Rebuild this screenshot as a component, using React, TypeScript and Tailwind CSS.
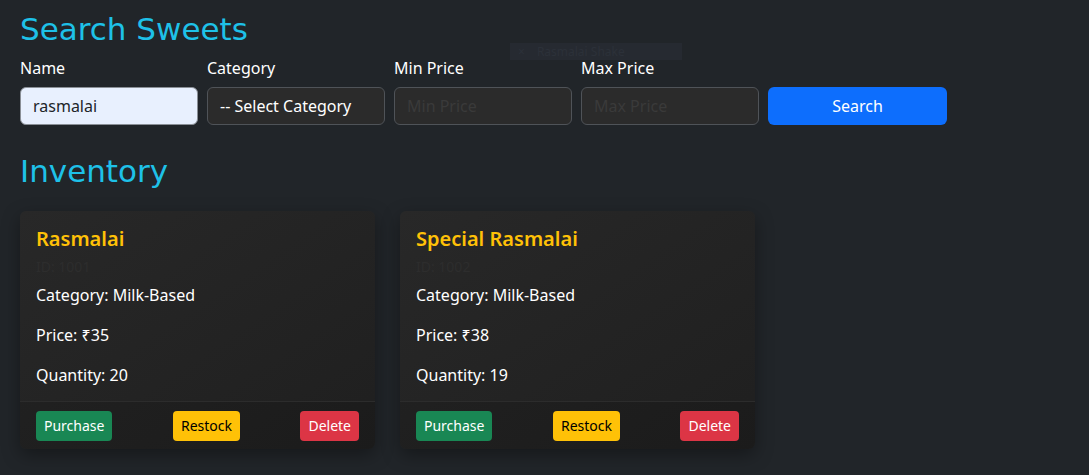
import React from 'react';

type Sweet = {
  id: string;
  name: string;
  category: string;
  price: number;
  quantity: number;
};

const sweets: Sweet[] = [
  { id: 'ID: 1001', name: 'Rasmalai', category: 'Milk-Based', price: 35, quantity: 20 },
  { id: 'ID: 1002', name: 'Special Rasmalai', category: 'Milk-Based', price: 38, quantity: 19 },
];

function SweetCard({ sweet }: { sweet: Sweet }) {
  return (
    <div className="w-[355px] rounded-md bg-gradient-to-br from-[#282828] to-[#1f1f1f] shadow-[0_6px_18px_rgba(0,0,0,0.35)] overflow-hidden">
      <div className="px-4 pt-4 pb-[14px]">
        <h5 className="text-[20px] leading-6 font-semibold text-[#ffc107] mb-[5px]">{sweet.name}</h5>
        <h6 className="text-sm leading-[21px] text-[#2d2d2d] mb-[6px]">{sweet.id}</h6>
        <p className="leading-6 mb-4">Category: {sweet.category}</p>
        <p className="leading-6 mb-4">Price: ₹{sweet.price}</p>
        <p className="leading-6">Quantity: {sweet.quantity}</p>
      </div>
      <div className="flex justify-between items-center border-t border-[#2c2c2c] bg-black/10 px-4 pt-[9px] pb-2">
        <button className="h-[30px] px-2 rounded text-sm bg-[#198754] text-white">Purchase</button>
        <button className="h-[30px] px-2 rounded text-sm bg-[#ffc107] text-black">Restock</button>
        <button className="h-[30px] px-2 rounded text-sm bg-[#dc3545] text-white">Delete</button>
      </div>
    </div>
  );
}

export default function App() {
  const headingFont = "font-['Comic_Sans_MS','DejaVu_Sans',sans-serif]";

  return (
    <div className="relative min-h-screen bg-[#212529] text-white font-['Noto_Sans','Open_Sans',sans-serif] px-5 pt-[10px] pb-6">
      {/* ghost suggestion box */}
      <div className="absolute left-[510px] top-[43px] w-[172px] h-[17px] bg-[#262a31] flex items-center px-2 gap-3 text-[12px] leading-4 text-[#2c3139]">
        <span>×</span>
        <span>Rasmalai Shake</span>
      </div>

      {/* Recherche */}
      <h2 className={`${headingFont} text-[31px] leading-[38px] text-[#1ec1e8] mb-2`}>Search Sweets</h2>
      <div className="flex gap-[9px] items-end">
        <div className="w-[178px]">
          <label className="block leading-6 mb-[7px]">Name</label>
          <input
            defaultValue="rasmalai"
            className="w-full h-[38px] rounded-md border border-[#8a8f96] bg-[#e8f0fe] text-[#212529] px-3 outline-none"
          />
        </div>
        <div className="w-[178px]">
          <label className="block leading-6 mb-[7px]">Category</label>
          <div className="w-full h-[38px] rounded-md border border-[#4f5358] bg-[#2b2b2b] px-3 flex items-center">
            -- Select Category
          </div>
        </div>
        <div className="w-[178px]">
          <label className="block leading-6 mb-[7px]">Min Price</label>
          <input
            placeholder="Min Price"
            className="w-full h-[38px] rounded-md border border-[#4f5358] bg-[#2b2b2b] px-3 outline-none placeholder:text-[#3a3a3a]"
          />
        </div>
        <div className="w-[178px]">
          <label className="block leading-6 mb-[7px]">Max Price</label>
          <input
            placeholder="Max Price"
            className="w-full h-[38px] rounded-md border border-[#4f5358] bg-[#2b2b2b] px-3 outline-none placeholder:text-[#3a3a3a]"
          />
        </div>
        <button className="w-[179px] h-[38px] rounded-md bg-[#0d6efd] text-white">Search</button>
      </div>

      {/* Inventaire */}
      <h2 className={`${headingFont} text-[31px] leading-[38px] text-[#1ec1e8] mt-[27px] mb-[21px]`}>Inventory</h2>
      <div className="flex gap-[25px]">
        {sweets.map((s) => (
          <SweetCard key={s.id} sweet={s} />
        ))}
      </div>
    </div>
  );
}
